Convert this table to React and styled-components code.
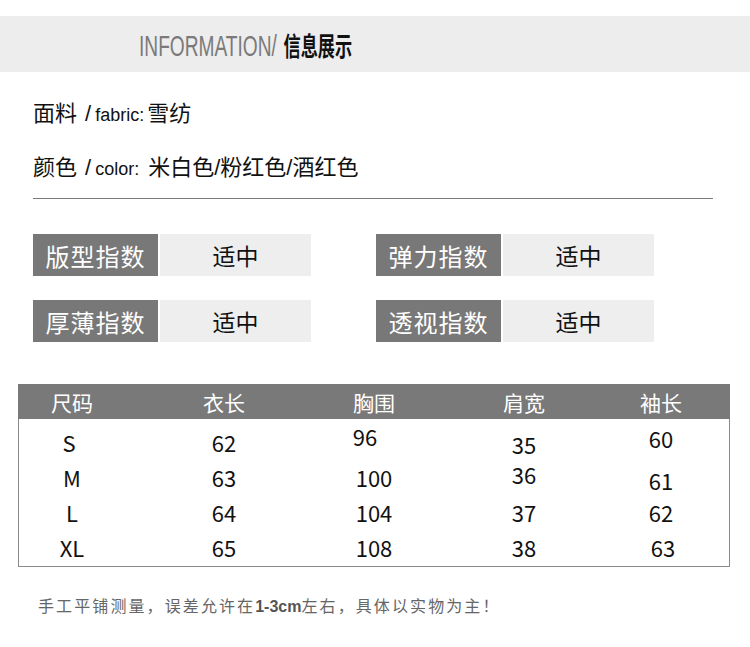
import React from 'react';
import styled, { createGlobalStyle } from 'styled-components';

const GlobalStyle = createGlobalStyle`
  body {
    margin: 0;
    background: #ffffff;
    font-family: "Liberation Sans", "Noto Sans CJK SC", sans-serif;
  }
`;

const Page = styled.div`
  width: 750px;
  height: 647px;
  padding-top: 16px;
  box-sizing: border-box;
  overflow: hidden;
`;

const Banner = styled.div`
  height: 56px;
  background: #ededed;
  display: flex;
  align-items: center;
  padding-left: 139px;
`;

const BannerText = styled.div`
  display: flex;
  align-items: baseline;
  white-space: nowrap;
  transform: scaleX(0.66);
  transform-origin: left center;
`;

const BannerEn = styled.span`
  font-family: "Liberation Sans", sans-serif;
  font-size: 29px;
  color: #7a7a7a;
`;

const BannerCn = styled.span`
  font-family: "Noto Sans CJK SC", sans-serif;
  font-size: 26px;
  font-weight: 700;
  color: #111;
  margin-left: 10px;
`;

const Info = styled.div`
  padding: 27px 37px 0 33px;
`;

const InfoLine = styled.div`
  height: 30px;
  line-height: 30px;
  white-space: nowrap;
  font-size: 22px;
  color: #111;
  margin-bottom: ${p => p.$gap || 0}px;
`;

const Slash = styled.span`
  margin: 0 4px 0 8px;
`;

const Small = styled.span`
  font-size: 18px;
  margin-right: ${p => p.$space || 2}px;
`;

const Divider = styled.div`
  height: 1px;
  background: #7a7a7a;
  margin-top: 15px;
`;

const Indexes = styled.div`
  display: grid;
  grid-template-columns: 278px 278px;
  column-gap: 65px;
  row-gap: 24px;
  padding: 35px 0 0 33px;
`;

const IndexItem = styled.div`
  display: flex;
  gap: 2px;
  height: 42px;
`;

const IndexLabel = styled.div`
  width: 125px;
  background: #787878;
  color: #fff;
  font-family: "Noto Sans CJK SC", sans-serif;
  font-size: 24px;
  display: flex;
  align-items: center;
  justify-content: center;
  letter-spacing: 1px;
`;

const IndexValue = styled.div`
  width: 151px;
  background: #eeeeee;
  color: #111;
  font-family: "Noto Sans CJK SC", sans-serif;
  font-size: 23px;
  display: flex;
  align-items: center;
  justify-content: center;
`;

const Table = styled.div`
  margin: 42px 0 0 18px;
  width: 712px;
  border: 1px solid #8a8a8a;
  border-top: none;
  box-sizing: border-box;
`;

const Cols = `
  display: grid;
  grid-template-columns: 106px 198px 102px 198px 76px;
  justify-items: center;
  align-items: center;
`;

const HeadRow = styled.div`
  ${Cols}
  height: 35px;
  background: #797979;
  margin: 0 -1px;
  padding-left: 1px;
  color: #fff;
  font-family: "Noto Sans CJK SC", sans-serif;
  font-size: 21px;
`;

const Body = styled.div`
  padding-top: 5px;
  padding-bottom: 2px;
`;

const Row = styled.div`
  ${Cols}
  height: 35px;
  font-family: "Noto Sans CJK SC", sans-serif;
  font-size: 22px;
  color: #111;
`;

const Cell = styled.span`
  transform: translate(${p => p.$dx || 0}px, ${p => p.$dy || 0}px);
`;

const Note = styled.div`
  margin: 26px 0 0 38px;
  font-family: "Noto Sans CJK SC", sans-serif;
  font-size: 16px;
  letter-spacing: 2.1px;
  color: #666;
  white-space: nowrap;
`;

const NoteBold = styled.b`
  font-family: "Liberation Sans", sans-serif;
  font-weight: 700;
  letter-spacing: 0;
  color: #555;
`;

const indexes = [
  ['版型指数', '适中'],
  ['弹力指数', '适中'],
  ['厚薄指数', '适中'],
  ['透视指数', '适中'],
];

const heads = ['尺码', '衣长', '胸围', '肩宽', '袖长'];

const rows = [
  [['S', -3, 0], ['62'], ['96', -9, -6], ['35', 0, 2], ['60', 0, -4]],
  [['M'], ['63'], ['100'], ['36', 0, -3], ['61', 0, 3]],
  [['L'], ['64'], ['104'], ['37'], ['62']],
  [['XL'], ['65'], ['108'], ['38'], ['63', 2, 0]],
];

export default function App() {
  return (
    <Page>
      <GlobalStyle />
      <Banner>
        <BannerText>
          <BannerEn>INFORMATION/</BannerEn>
          <BannerCn>信息展示</BannerCn>
        </BannerText>
      </Banner>

      <Info>
        <InfoLine $gap={24}>
          面料<Slash>/</Slash><Small $space={3}>fabric:</Small>雪纺
        </InfoLine>
        <InfoLine>
          颜色<Slash>/</Slash><Small $space={9}>color:</Small>米白色/粉红色/酒红色
        </InfoLine>
        <Divider />
      </Info>

      <Indexes>
        {indexes.map(([label, value]) => (
          <IndexItem key={label}>
            <IndexLabel>{label}</IndexLabel>
            <IndexValue>{value}</IndexValue>
          </IndexItem>
        ))}
      </Indexes>

      <Table>
        <HeadRow>
          {heads.map(h => <span key={h}>{h}</span>)}
        </HeadRow>
        <Body>
          {rows.map((r, i) => (
            <Row key={i}>
              {r.map(([v, dx, dy], j) => (
                <Cell key={j} $dx={dx} $dy={dy}>{v}</Cell>
              ))}
            </Row>
          ))}
        </Body>
      </Table>

      <Note>
        手工平铺测量，误差允许在<NoteBold>1-3cm</NoteBold>左右，具体以实物为主！
      </Note>
    </Page>
  );
}
